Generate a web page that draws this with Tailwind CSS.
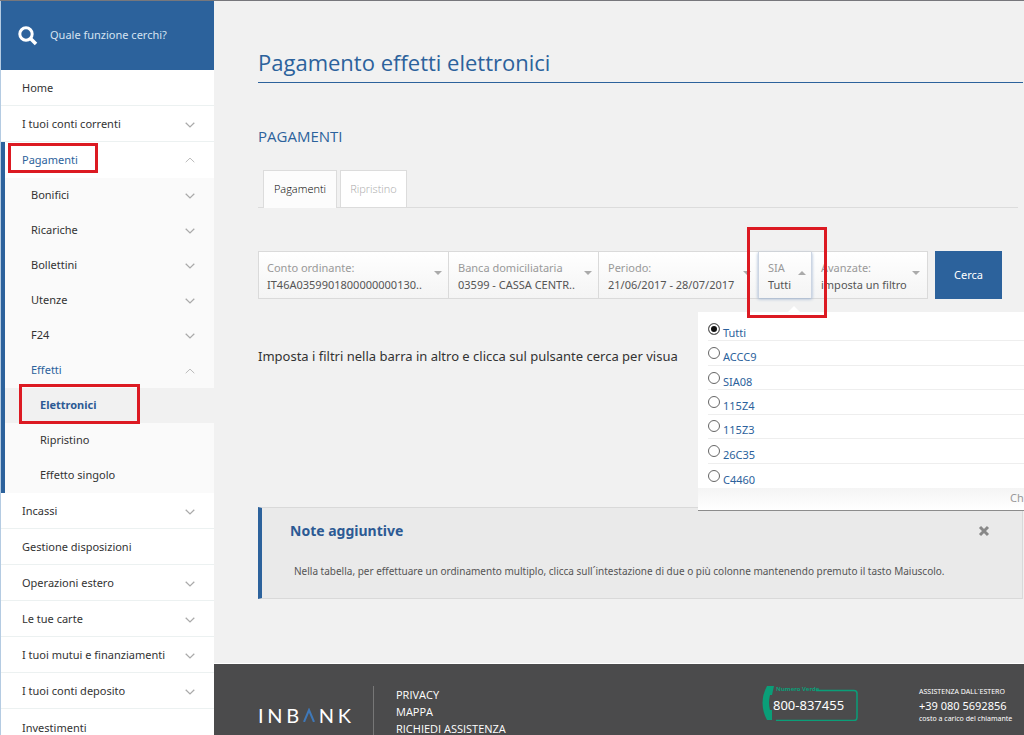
<!DOCTYPE html>
<html lang="it">
<head>
<meta charset="utf-8">
<title>Inbank - Pagamento effetti elettronici</title>
<script src="https://cdn.jsdelivr.net/npm/@tailwindcss/browser@4"></script>
</head>
<body class="bg-[#f1f1f1] font-['Noto_Sans',sans-serif] text-[11px] text-[#333]">
<svg class="hidden" aria-hidden="true">
  <symbol id="down" viewBox="0 0 10 6"><path d="M.7 .8 5 4.9 9.300 .8" fill="none" stroke="currentColor" stroke-width="1.300"/></symbol>
  <symbol id="up" viewBox="0 0 10 6"><path d="M.7 5.200 5 1.100 9.300 5.200" fill="none" stroke="currentColor" stroke-width="1"/></symbol>
  <symbol id="caret" viewBox="0 0 8 4"><path d="M0 0h8L4 4z" fill="currentColor"/></symbol>
</svg>
<div class="flex h-screen overflow-hidden border-t border-[#77777c]">

  <aside class="w-[214px] shrink-0 border-l border-[#b4cbe2] bg-white">
    <label class="flex h-[69px] items-center gap-3 bg-[#2c629c] pl-[17px]">
      <svg class="size-5 shrink-0 text-white" viewBox="0 0 20 20" fill="none" stroke="currentColor"><circle cx="8" cy="8" r="6.200" stroke-width="3"/><path d="m12.500 12.500 5.500 5.500" stroke-width="3.600"/></svg>
      <input type="search" placeholder="Quale funzione cerchi?" aria-label="Quale funzione cerchi?" class="w-40 bg-transparent text-[11px] text-white outline-none placeholder:text-[#d5e3f1]">
    </label>
    <nav>
      <a href="#" class="flex h-9 items-center border-b border-[#ecf1f1] pl-[21px] pt-0.5">Home</a>
      <a href="#" class="flex h-9 items-center justify-between border-b border-[#ecf1f1] pl-[21px] pr-[19px] pt-0.5">I tuoi conti correnti<svg class="h-1.5 w-2.5 text-[#aaa]"><use href="#down"/></svg></a>
      <div class="border-l-4 border-[#2c629c]">
        <a href="#" class="relative flex h-9 items-center justify-between pl-[17px] pr-[19px] text-[#2c629c]">Pagamenti<svg class="h-1.5 w-2.5 text-[#bbb]"><use href="#up"/></svg>
          <span class="absolute left-[3px] top-px h-[30px] w-[90px] border-3 border-[#dc1a22]"></span></a>
        <div class="bg-[#fafafa]">
          <a href="#" class="flex h-[35px] items-center justify-between pl-[26px] pr-[19px]">Bonifici<svg class="h-1.5 w-2.5 text-[#aaa]"><use href="#down"/></svg></a>
          <a href="#" class="flex h-[35px] items-center justify-between pl-[26px] pr-[19px]">Ricariche<svg class="h-1.5 w-2.5 text-[#aaa]"><use href="#down"/></svg></a>
          <a href="#" class="flex h-[35px] items-center justify-between pl-[26px] pr-[19px]">Bollettini<svg class="h-1.5 w-2.5 text-[#aaa]"><use href="#down"/></svg></a>
          <a href="#" class="flex h-[35px] items-center justify-between pl-[26px] pr-[19px]">Utenze<svg class="h-1.5 w-2.5 text-[#aaa]"><use href="#down"/></svg></a>
          <a href="#" class="flex h-[35px] items-center justify-between pl-[26px] pr-[19px]">F24<svg class="h-1.5 w-2.5 text-[#aaa]"><use href="#down"/></svg></a>
          <a href="#" class="flex h-[35px] items-center justify-between pl-[26px] pr-[19px] text-[#2c629c]">Effetti<svg class="h-1.5 w-2.5 text-[#bbb]"><use href="#up"/></svg></a>
          <a href="#" class="relative flex h-[35px] items-center bg-[#f1f1f1] pl-[35px] font-bold text-[#2c5a94]">Elettronici
            <span class="absolute -top-1 left-3.5 h-10 w-[121px] border-3 border-[#dc1a22]"></span></a>
          <a href="#" class="flex h-[35px] items-center pl-[35px]">Ripristino</a>
          <a href="#" class="flex h-[35px] items-center pl-[35px]">Effetto singolo</a>
        </div>
      </div>
      <a href="#" class="flex h-9 items-center justify-between border-b border-[#ecf1f1] pl-[21px] pr-[19px] pt-0.5">Incassi<svg class="h-1.5 w-2.5 text-[#aaa]"><use href="#down"/></svg></a>
      <a href="#" class="flex h-9 items-center border-b border-[#ecf1f1] pl-[21px] pt-0.5">Gestione disposizioni</a>
      <a href="#" class="flex h-9 items-center justify-between border-b border-[#ecf1f1] pl-[21px] pr-[19px] pt-0.5">Operazioni estero<svg class="h-1.5 w-2.5 text-[#aaa]"><use href="#down"/></svg></a>
      <a href="#" class="flex h-9 items-center justify-between border-b border-[#ecf1f1] pl-[21px] pr-[19px] pt-0.5">Le tue carte<svg class="h-1.5 w-2.5 text-[#aaa]"><use href="#down"/></svg></a>
      <a href="#" class="flex h-9 items-center justify-between border-b border-[#ecf1f1] pl-[21px] pr-[19px] pt-0.5">I tuoi mutui e finanziamenti<svg class="h-1.5 w-2.5 text-[#aaa]"><use href="#down"/></svg></a>
      <a href="#" class="flex h-9 items-center justify-between border-b border-[#ecf1f1] pl-[21px] pr-[19px] pt-0.5">I tuoi conti deposito<svg class="h-1.5 w-2.5 text-[#aaa]"><use href="#down"/></svg></a>
      <a href="#" class="flex h-9 items-center pl-[21px] pt-0.5">Investimenti</a>
    </nav>
  </aside>

  <div class="min-w-0 flex-1 overflow-hidden">
    <main class="pb-16 pl-11 pr-px pt-[45px]">
      <h1 class="border-b border-[#2c629c] pb-1 font-['Open_Sans',sans-serif] text-[22px] leading-8 text-[#2c629c]">Pagamento effetti elettronici</h1>
      <h2 class="mt-[41px] font-['Open_Sans',sans-serif] text-[15px] leading-6 text-[#2c629c]">PAGAMENTI</h2>

      <div role="tablist" class="mr-[5px] mt-[22px] flex gap-[3px] border-b border-[#dcdcdc] pl-[5px] font-['Open_Sans',sans-serif] font-light">
        <button role="tab" aria-selected="true" class="-mb-px h-[38px] w-[74px] border border-b-0 border-[#dcdcdc] bg-[#fcfcfc] text-black">Pagamenti</button>
        <button role="tab" aria-selected="false" class="h-[37px] w-[67px] border border-b-0 border-[#dcdcdc] bg-white text-[#aaa]">Ripristino</button>
      </div>

      <div class="mt-[43px] flex h-12 gap-[7px]">
        <div class="flex border border-[#dadada] bg-linear-to-b from-white to-[#f4f4f4] leading-[17px]">
          <button class="flex w-[190px] gap-1 border-r border-[#dadada] pl-2 pt-[7px] text-left text-[#555]"><span class="w-[163px]"><span class="block text-[#999]">Conto ordinante:</span>IT46A0359901800000000130..</span><svg class="mt-3 h-1 w-2 shrink-0 text-[#aaa]"><use href="#caret"/></svg></button>
          <button class="flex w-[150px] gap-1 border-r border-[#dadada] pl-[9px] pt-[7px] text-left text-[#555]"><span class="w-[122px] whitespace-nowrap"><span class="block text-[#999]">Banca domiciliataria</span>03599 - CASSA CENTR..</span><svg class="mt-3 h-1 w-2 shrink-0 text-[#aaa]"><use href="#caret"/></svg></button>
          <button class="flex w-[159px] pl-[9px] pt-[7px] text-left text-[#555]"><span class="w-[135px] shrink-0 whitespace-nowrap"><span class="block text-[#999]">Periodo:</span>21/06/2017 - 28/07/2017</span><svg class="mt-3 h-1 w-2 shrink-0 text-[#aaa]"><use href="#caret"/></svg></button>
          <div class="relative z-10">
            <button aria-expanded="true" class="flex h-full w-[54px] gap-1 border-x border-[#ccd5e3] pl-[9px] pt-[7px] text-left text-[#555] shadow-[0_1px_3px_#9db3cf]"><span class="w-[26px]"><span class="block text-[#999]">SIA</span>Tutti</span><svg class="mt-3 h-1 w-2 shrink-0 rotate-180 text-[#aaa]"><use href="#caret"/></svg></button>
            <svg class="absolute left-[30px] top-[54px] h-1.5 w-3 text-white" viewBox="0 0 12 6"><path d="M0 6 6 0l6 6z" fill="currentColor"/></svg>
            <div class="absolute -left-[60px] top-[60px] w-[356px] border-b border-[#8c8c8c] bg-white pt-[5px]">
              <fieldset class="grid h-[171px] grid-rows-7 pl-2.5 leading-4 text-[#2c629c]">
                <label class="flex items-center gap-[3px] border-b border-[#eee]"><input type="radio" name="sia" checked class="size-3 appearance-none rounded-full border border-[#666] bg-white checked:bg-[#111] checked:shadow-[inset_0_0_0_2px_#fff]"><span class="mt-2">Tutti</span></label>
                <label class="flex items-center gap-[3px] border-b border-[#eee]"><input type="radio" name="sia" class="size-3 appearance-none rounded-full border border-[#666] bg-white"><span class="mt-2">ACCC9</span></label>
                <label class="flex items-center gap-[3px] border-b border-[#eee]"><input type="radio" name="sia" class="size-3 appearance-none rounded-full border border-[#666] bg-white"><span class="mt-2">SIA08</span></label>
                <label class="flex items-center gap-[3px] border-b border-[#eee]"><input type="radio" name="sia" class="size-3 appearance-none rounded-full border border-[#666] bg-white"><span class="mt-2">115Z4</span></label>
                <label class="flex items-center gap-[3px] border-b border-[#eee]"><input type="radio" name="sia" class="size-3 appearance-none rounded-full border border-[#666] bg-white"><span class="mt-2">115Z3</span></label>
                <label class="flex items-center gap-[3px] border-b border-[#eee]"><input type="radio" name="sia" class="size-3 appearance-none rounded-full border border-[#666] bg-white"><span class="mt-2">26C35</span></label>
                <label class="flex items-center gap-[3px]"><input type="radio" name="sia" class="size-3 appearance-none rounded-full border border-[#666] bg-white"><span class="mt-2">C4460</span></label>
              </fieldset>
              <div class="h-[22px] bg-linear-to-b from-[#f4f4f4] to-white pl-[312px] text-[#999]"><button class="leading-5">Chiudi</button></div>
            </div>
            <span class="absolute -left-[11px] -top-[25px] h-[91px] w-20 border-3 border-[#dc1a22]"></span>
          </div>
          <button class="flex w-[115px] pl-[9px] pt-[7px] text-left text-[#555]"><span class="w-[91px] shrink-0 whitespace-nowrap"><span class="block text-[#999]">Avanzate:</span>imposta un filtro</span><svg class="mt-3 h-1 w-2 shrink-0 text-[#aaa]"><use href="#caret"/></svg></button>
        </div>
        <button class="w-[67px] bg-[#2c629c] text-white">Cerca</button>
      </div>

      <p class="mt-[45px] whitespace-nowrap text-[13px] leading-6">Imposta i filtri nella barra in altro e clicca sul pulsante cerca per visua</p>

      <section class="mt-[139px] border border-l-4 border-[#d9d9d9] border-l-[#2c629c] bg-[#eaeaea] pb-[15px] pl-7 pr-8 pt-[11px]">
        <div class="flex items-center justify-between">
          <h3 class="text-sm font-bold leading-6 text-[#2c5a94]">Note aggiuntive</h3>
          <button aria-label="Chiudi note" class="text-[#888]"><svg class="size-3" viewBox="0 0 12 12" fill="none" stroke="currentColor" stroke-width="3"><path d="m2 2 8 8M10 2l-8 8"/></svg></button>
        </div>
        <p class="mt-4 pl-1 text-[10px] leading-6 text-[#555]">Nella tabella, per effettuare un ordinamento multiplo, clicca sull´intestazione di due o più colonne mantenendo premuto il tasto Maiuscolo.</p>
      </section>
    </main>

    <footer class="flex h-32 border-t border-white bg-[#4b4b4c] pl-11 pt-[22px] text-white">
      <div aria-label="INBANK" class="mt-[17px] flex h-6 w-[93px] items-center justify-between font-['Lato',sans-serif] text-xl"><span>I</span><span>N</span><span>B</span><svg class="h-3.5 w-3" viewBox="0 0 12 14"><path d="M1 14 6 2l5 12" fill="none" stroke="#3f78b8" stroke-width="2"/></svg><span>N</span><span>K</span></div>
      <ul class="ml-[22px] border-l border-[#777] pl-[22px] font-['Open_Sans',sans-serif] text-[11px] leading-[17px]">
        <li><a href="#">PRIVACY</a></li>
        <li><a href="#">MAPPA</a></li>
        <li><a href="#">RICHIEDI ASSISTENZA</a></li>
      </ul>
      <div class="relative ml-auto mr-[61px] h-[35px] w-24">
        <svg class="absolute inset-0 h-[35px] w-24 text-[#0a9e78]" viewBox="0 0 96 35" fill="none" stroke="currentColor"><path d="M54 4.500h38q3 0 3 3v24q0 3-3 3H14" stroke-width="1.500"/><path d="M5 0h7l-2 9H8q-2 8 0 15h2v10H5Q-4 17 5 0z" fill="currentColor" stroke="none"/></svg>
        <span class="absolute left-3.5 -top-px text-[6px] font-bold leading-[9px] text-[#0a9e78]">Numero Verde</span>
        <span class="absolute left-[11px] top-[7px] text-[13px] leading-6">800-837455</span>
      </div>
      <div class="w-[105px] whitespace-nowrap">
        <p class="text-[7px] leading-3">ASSISTENZA DALL´ESTERO</p>
        <p class="text-[11px] leading-4">+39 080 5692856</p>
        <p class="text-[7px] leading-[10px]">costo a carico del chiamante</p>
      </div>
    </footer>
  </div>
</div>
</body>
</html>
